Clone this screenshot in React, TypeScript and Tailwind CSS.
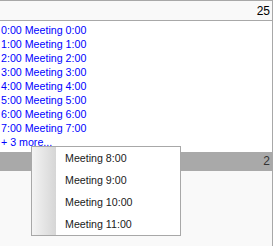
import React from 'react';

const events = [0, 1, 2, 3, 4, 5, 6, 7];
const more = ['Meeting 8:00', 'Meeting 9:00', 'Meeting 10:00', 'Meeting 11:00'];

export default function App() {
  return (
    <div className="relative w-[274px] h-[246px] overflow-hidden bg-white font-['Liberation_Sans',Arial,sans-serif]">
      <div className="w-[273px] h-full flex flex-col border-t border-r border-[#a8a8a8]">
        {/* day header */}
        <div className="h-[20px] shrink-0 bg-[#f9f9f9] border-b border-[#a8a8a8] text-right pr-[2px] text-[12px] leading-[20px] text-black">
          25
        </div>

        {/* day cell */}
        <div className="h-[131px] shrink-0 bg-white pt-[2px] pl-[1px] text-[8pt] leading-[14px] text-[#0000ff]">
          {events.map((h) => (
            <div key={h} className="whitespace-nowrap">
              {h}:00 Meeting {h}:00
            </div>
          ))}
          <div className="whitespace-nowrap cursor-pointer">+ 3 more...</div>
        </div>

        {/* next week header */}
        <div className="h-[19px] shrink-0 bg-[#a9a9a9] text-right pr-[2px] text-[12px] leading-[19px] text-[#333]">
          2
        </div>

        <div className="flex-1 bg-[#f9f9f9]" />
      </div>

      {/* more popup */}
      <div className="absolute left-[31px] top-[146px] w-[150px] h-[90px] border border-[#a8a8a8] bg-white flex">
        <div className="w-[24px] shrink-0 bg-gradient-to-r from-[#f4f4f4] to-[#d6d6d6]" />
        <div className="flex-1 flex flex-col">
          {more.map((m) => (
            <div key={m} className="h-[22px] pl-[9px] text-[8pt] leading-[22px] text-[#1a1a1a] whitespace-nowrap">
              {m}
            </div>
          ))}
        </div>
      </div>
    </div>
  );
}
